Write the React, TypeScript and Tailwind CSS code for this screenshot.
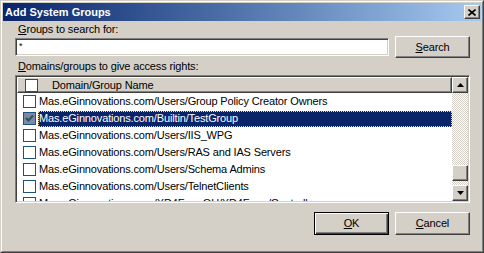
import { Fragment } from 'react';

const raised =
  "border border-t-white border-l-white border-r-[#404040] border-b-[#404040] shadow-[inset_-1px_-1px_0_#808080] bg-[#d4d0c8]";
const sunken =
  "border border-t-[#808080] border-l-[#808080] border-r-white border-b-white shadow-[inset_1px_1px_0_#404040,inset_-1px_-1px_0_#d4d0c8]";

const groups = [
  { name: "Mas.eGinnovations.com/Users/Group Policy Creator Owners" },
  { name: "Mas.eGinnovations.com/Builtin/TestGroup", selected: true },
  { name: "Mas.eGinnovations.com/Users/IIS_WPG" },
  { name: "Mas.eGinnovations.com/Users/RAS and IAS Servers" },
  { name: "Mas.eGinnovations.com/Users/Schema Admins" },
  { name: "Mas.eGinnovations.com/Users/TelnetClients" },
  { name: "Mas.eGinnovations.com/XD4FarmOU/XD4Farm/Controllers" },
];

function Checkbox({ checked }: { checked?: boolean }) {
  return (
    <span
      className={`w-[13px] h-[13px] shrink-0 border border-[#1c5180] flex items-center justify-center ${
        checked ? "bg-[#7f87a8]" : "bg-white"
      }`}
    >
      {checked && (
        <svg width="11" height="11" viewBox="0 0 11 11">
          <polyline points="2,5 4.5,7.5 9,2.5" fill="none" stroke="#1f5a48" strokeWidth="2" />
        </svg>
      )}
    </span>
  );
}

function Arrow({ up }: { up?: boolean }) {
  return (
    <svg width="7" height="4" viewBox="0 0 7 4">
      <polygon points={up ? "3.5,0 7,4 0,4" : "0,0 7,0 3.5,4"} fill="#000" />
    </svg>
  );
}

export default function App() {
  return (
    <div className="w-[484px] h-[253px] bg-[#d4d0c8] border border-t-[#d4d0c8] border-l-[#d4d0c8] border-r-[#404040] border-b-[#404040] font-['Liberation_Sans',Arial,sans-serif] text-[11px] tracking-[-0.15px] text-black select-none">
      <div className="h-full border border-t-white border-l-white border-r-[#808080] border-b-[#808080] p-px flex flex-col">
        {/* title bar */}
        <div className="h-[18px] shrink-0 flex items-center justify-between bg-linear-to-r from-[#0a246a] to-[#a6caf0] pl-[2px] pr-[1px]">
          <span className="text-white font-bold text-[11px] tracking-normal leading-none">Add System Groups</span>
          <button className={`${raised} w-[16px] h-[14px] flex items-center justify-center`}>
            <svg width="8" height="7" viewBox="0 0 8 7">
              <path d="M0.5 0.5 L7.5 6.5 M7.5 0.5 L0.5 6.5" stroke="#000" strokeWidth="1.6" />
            </svg>
          </button>
        </div>

        <div className="flex flex-col pl-[12px] pr-[11px]">
          <div className="h-[14px] leading-[14px] pl-[3px] mt-[1px]">
            <span className="underline">G</span>roups to search for:
          </div>

          <div className="h-[22px] flex items-center gap-[6px]">
            <div className={`${sunken} flex-1 h-[18px] bg-white pl-[3px] leading-[14px] text-[9px]`}>*</div>
            <button className={`${raised} w-[75px] h-[22px] flex items-center justify-center`}>
              <span>
                <span className="underline">S</span>earch
              </span>
            </button>
          </div>

          <div className="h-[17px] leading-[17px] pl-[3px]">
            <span className="underline">D</span>omains/groups to give access rights:
          </div>

          {/* list */}
          <div className={`${sunken} h-[128px] p-px bg-white flex`}>
            <div className="flex-1 flex flex-col overflow-hidden">
              <div className={`${raised} h-[16px] shrink-0 flex items-center pl-[7px]`}>
                <Checkbox />
                <span className="ml-[14px]">Domain/Group Name</span>
              </div>
              {groups.map((g) => (
                <Fragment key={g.name}>
                  <div className="h-[17px] shrink-0 flex items-center pl-[6px]">
                    <Checkbox checked={g.selected} />
                    <span
                      className={`ml-[2px] h-[16px] flex-1 flex items-center border whitespace-nowrap ${
                        g.selected
                          ? "bg-[#0a246a] text-white border-dotted border-[#f0d8a0]"
                          : "border-transparent"
                      }`}
                    >
                      {g.name}
                    </span>
                  </div>
                </Fragment>
              ))}
            </div>
            <div className="w-[16px] shrink-0 flex flex-col">
              <div className={`${raised} h-[16px] shrink-0 flex items-center justify-center`}>
                <Arrow up />
              </div>
              <div className="flex-1 flex flex-col justify-end pb-[4px] bg-[repeating-conic-gradient(#d4d0c8_0_25%,#ffffff_0_50%)] bg-[length:2px_2px]">
                <div className={`${raised} h-[16px]`} />
              </div>
              <div className={`${raised} h-[16px] shrink-0 flex items-center justify-center`}>
                <Arrow />
              </div>
            </div>
          </div>

          {/* buttons */}
          <div className="mt-[9px] flex justify-end gap-[6px]">
            <button className="w-[75px] h-[23px] border border-black bg-[#d4d0c8] shadow-[inset_1px_1px_0_#ffffff,inset_-1px_-1px_0_#404040,inset_-2px_-2px_0_#808080] flex items-center justify-center">
              <span>
                <span className="underline">O</span>K
              </span>
            </button>
            <button className={`${raised} w-[75px] h-[23px] flex items-center justify-center`}>
              <span>
                <span className="underline">C</span>ancel
              </span>
            </button>
          </div>
        </div>
      </div>
    </div>
  );
}
